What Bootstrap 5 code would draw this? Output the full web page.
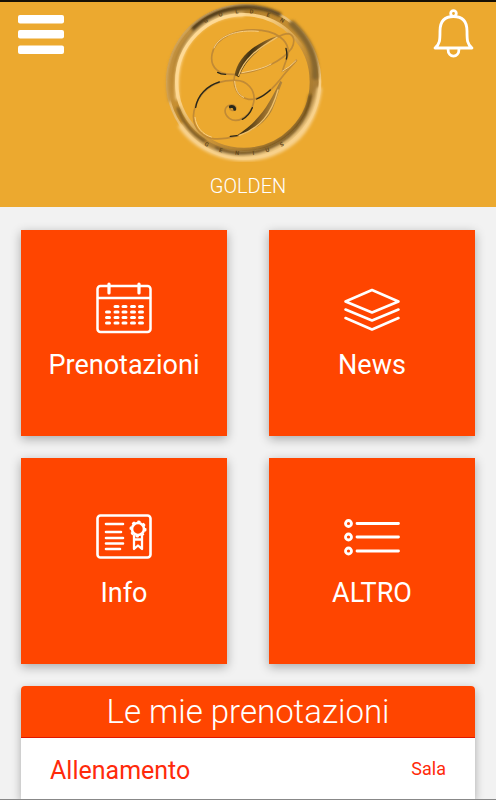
<!DOCTYPE html>
<html lang="it">
<head>
<meta charset="utf-8">
<meta name="viewport" content="width=device-width, initial-scale=1">
<title>Golden</title>
<link href="https://cdn.jsdelivr.net/npm/bootstrap@5.3.0/dist/css/bootstrap.min.css" rel="stylesheet">
<style>
body{font-family:Roboto,"Liberation Sans",sans-serif;background:#f2f2f2;min-height:100vh;border-bottom:1px solid #888}
.top-bar{background:#eca92f;border-top:2px solid #161005;height:207px}
.icon-btn{background:none;border:0;padding:0;line-height:0}
.menu-btn{margin:13px 0 0 18px}
.bell-btn{margin:7px 22px 0 0}
.brand-name{font-size:20px;line-height:24px;font-weight:300;margin-top:12px}
.engraved{font-size:17px;font-weight:700;fill:#63471a}
.content-area{padding:23px 21px 0}
.tile-grid{display:grid;grid-template-columns:1fr 1fr;gap:22px 42px}
.tile{background:#ff4500;aspect-ratio:1;box-shadow:0 3px 10px rgba(0,0,0,.3);font-size:27px;line-height:36px;padding-bottom:2px}
.tile svg{margin-bottom:13px}
.bookings{margin-top:22px;border-radius:4px 4px 0 0;box-shadow:0 3px 10px rgba(0,0,0,.3)}
.bookings-head{background:#ff4500;border-bottom:1px solid #e01800;border-radius:4px 4px 0 0;font-size:33px;line-height:51px;font-weight:300}
.bookings-row{color:#ff2a0a;padding:15px 28px 9px;margin:0 1px;min-height:61px}
.activity{font-size:25px;line-height:36px}
.room{font-size:18px;line-height:32px}
</style>
<script src="https://cdn.jsdelivr.net/npm/bootstrap@5.3.0/dist/js/bootstrap.bundle.min.js"></script>
</head>
<body>
<header class="top-bar position-relative text-white">
  <div class="d-flex justify-content-between position-absolute top-0 start-0 w-100">
    <button class="icon-btn menu-btn align-self-start" type="button" aria-label="Menu">
      <svg width="47" height="40" viewBox="0 0 47 40" fill="#fff"><rect y="0" width="46" height="8.500" rx="2"/><rect y="15" width="46" height="8.500" rx="2"/><rect y="30.500" width="46" height="8.500" rx="2"/></svg>
    </button>
    <button class="icon-btn bell-btn align-self-start" type="button" aria-label="Notifiche">
      <svg width="42" height="50" viewBox="0 0 42 50" fill="none" stroke="#fff" stroke-width="2.800" stroke-linejoin="round"><circle cx="21.500" cy="4.500" r="2.800"/><path d="M3 39C8 35 8 31 8 22C8 12 13 7.500 21.500 7.500S35 12 35 22C35 31 35 35 40 39ZM16 40C16 49.500 27 49.500 27 40"/></svg>
    </button>
  </div>
  <div class="d-flex flex-column align-items-center">
    <svg width="180" height="160" viewBox="6 6 540 480" fill="none" stroke-linecap="round" role="img" aria-label="Golden logo">
      <defs>
        <linearGradient id="rim" x1="0.200" y1="0" x2="0.800" y2="1"><stop offset="0" stop-color="#80602a"/><stop offset=".2" stop-color="#b9852f"/><stop offset=".5" stop-color="#cd9433"/><stop offset=".75" stop-color="#a87c36"/><stop offset="1" stop-color="#f6d086"/></linearGradient>
        <linearGradient id="glow" x1="0" y1="0" x2="1" y2="1"><stop offset="0" stop-color="#ffdc9a"/><stop offset=".35" stop-color="#f8cf83"/><stop offset=".6" stop-color="#c99237"/><stop offset="1" stop-color="#80602a"/></linearGradient>
        <linearGradient id="outer" x1="0" y1="0" x2="1" y2="1"><stop offset="0" stop-color="#caa05a"/><stop offset=".5" stop-color="#f2c678"/><stop offset="1" stop-color="#fbd591"/></linearGradient>
        <linearGradient id="pen" x1="0" y1="0.300" x2="1" y2="0.700"><stop offset="0" stop-color="#b9842f"/><stop offset=".35" stop-color="#3f3011"/><stop offset=".6" stop-color="#8e6526"/><stop offset="1" stop-color="#e8b860"/></linearGradient>
        <filter id="soften" x="-20%" y="-20%" width="140%" height="140%"><feGaussianBlur stdDeviation="4"/></filter>
      </defs>
      <circle cx="263" cy="246" r="216" stroke="url(#rim)" stroke-width="32"/>
      <circle cx="263" cy="246" r="229" stroke="url(#outer)" stroke-width="8"/>
      <circle cx="264" cy="246" r="202" stroke="url(#glow)" stroke-width="10"/>
      <g filter="url(#soften)">
        <path d="M110 87C185 15 290 5 370 43" stroke="#4d3916" stroke-width="12"/>
        <path d="M409 72C459 120 481 175 478 230" stroke="#86662e" stroke-width="20"/>
        <path d="M66 325C80 365 105 400 145 423" stroke="#6b4e1d" stroke-width="8"/>
        <path d="M180 446C265 479 361 450 415 391C443 361 459 322 463 287" stroke="#654717" stroke-width="9"/>
        <path d="M75 380C155 490 315 505 412 425C458 387 484 323 490 268" stroke="#f8d18b" stroke-width="15"/>
        <path d="M42 300C28 215 53 144 103 92" stroke="#c5933f" stroke-width="13"/>
        <path d="M64 295C55 198 82 129 137 85C172 57 218 43 260 44" stroke="#ffdb98" stroke-width="11"/>
      </g>
      <g class="engraved" text-anchor="middle" aria-hidden="true">
        <text transform="translate(152 67) rotate(-30)">G</text><text transform="translate(195 49) rotate(-18)">O</text><text transform="translate(243 40) rotate(-5)">L</text><text transform="translate(286 40) rotate(6)">D</text><text transform="translate(335 50) rotate(19)">E</text><text transform="translate(376 66) rotate(30)">N</text>
        <text transform="translate(149 438) rotate(31)">G</text><text transform="translate(193 456) rotate(19)">E</text><text transform="translate(243 465) rotate(5)">N</text><text transform="translate(293 465) rotate(-7)">I</text><text transform="translate(336 456) rotate(-19)">U</text><text transform="translate(380 438) rotate(-31)">S</text>
      </g>
      <g stroke="#c18a35" stroke-width="5">
        <path d="M237 223C190 225 161 205 168 163C178 110 246 83 317 91C375 98 407 133 393 174C388 190 382 201 380 213C396 207 412 195 421 181"/>
        <path d="M246 221C315 216 382 181 407 145C419 122 413 105 397 101C381 101 367 110 358 115"/>
        <path d="M235 241C172 239 126 278 114 333C106 374 129 406 166 415C191 420 223 413 248 406"/>
        <path d="M237 223C227 259 246 293 278 298C318 302 353 265 383 225L421 181"/>
        <path d="M235 241C273 239 300 270 293 307C285 345 247 374 220 355C202 342 203 319 223 315C235 313 243 321 238 329C230 334 222 330 221 324"/>
      </g>
      <path d="M236 226C243 177 292 129 367 107C313 145 266 179 249 232Z" fill="url(#pen)"/>
      <path d="M373 243C343 301 319 358 240 408C294 394 332 364 350 326C362 301 366 275 379 247Z" fill="url(#pen)"/>
      <path d="M248 226C263 178 303 147 363 112M250 406C314 384 346 342 366 270" stroke="#efc06a" stroke-width="4"/>
      <g stroke="#292719" stroke-width="4">
        <path d="M185 217Q194 223 209 223M119 322C125 286 153 257 190 246M302 297Q322 289 343 270M223 409L243 407M259 358Q280 346 289 323M390 145Q395 166 391 177"/>
        <path d="M223 320Q236 318 236 328" stroke-width="9"/>
      </g>
      <path d="M174 144C189 107 245 88 307 94M258 218C291 212 323 205 345 192M236 244C238 268 246 285 263 292M117 352C120 381 140 404 166 411M380 213Q400 203 420 182" stroke="#f7cf87" stroke-width="3"/>
    </svg>
    <div class="brand-name">GOLDEN</div>
  </div>
</header>
<main class="content-area">
  <nav class="tile-grid" aria-label="Sezioni">
    <a href="#prenotazioni" class="tile d-flex flex-column align-items-center justify-content-center text-white text-decoration-none">
      <svg width="56" height="52" viewBox="0 0 56 52" fill="none" stroke="#fff" stroke-width="2.500" stroke-linecap="round"><rect x="1.500" y="4" width="53" height="46" rx="3"/><path d="M2 16H54"/><path d="M13 2V11M43 2V11" stroke-width="3.200"/><path d="M19 24.500h3M27 24.500h3M35.500 24.500h3M43.500 24.500h3M10.500 30h3M19 30h3M27 30h3M35.500 30h3M43.500 30h3M10.500 35.500h3M19 35.500h3M27 35.500h3M35.500 35.500h3M43.500 35.500h3M10.500 41h3M19 41h3M27 41h3M35.500 41h3M43.500 41h3" stroke-width="3"/></svg>
      Prenotazioni
    </a>
    <a href="#news" class="tile d-flex flex-column align-items-center justify-content-center text-white text-decoration-none">
      <svg width="56" height="52" viewBox="0 0 56 52" fill="none" stroke="#fff" stroke-width="2.500" stroke-linecap="round" stroke-linejoin="round"><path d="M28 8L54.500 19.500L28 30.500L1.500 19.500ZM1.500 27.500L28 38.500L54.500 27.500M1.500 36L28 47.500L54.500 36"/></svg>
      News
    </a>
    <a href="#info" class="tile d-flex flex-column align-items-center justify-content-center text-white text-decoration-none">
      <svg width="56" height="52" viewBox="0 0 56 52" fill="none" stroke="#fff" stroke-width="2.600" stroke-linecap="round" stroke-linejoin="round"><rect x="1.500" y="5.500" width="53" height="42" rx="3"/><path d="M10 14H27M10 22H25M10 28H27M10 33.500H27M10 39H24"/><circle cx="42" cy="19" r="6"/><circle cx="42" cy="19" r="7.500" stroke-width="2" stroke-dasharray="1.500 4.390"/><path d="M38 26V39L42 35.500L46 39V26M39 29.500H45" stroke-width="2.300"/></svg>
      Info
    </a>
    <a href="#altro" class="tile d-flex flex-column align-items-center justify-content-center text-white text-decoration-none">
      <svg width="56" height="52" viewBox="0 0 56 52" fill="none" stroke="#fff" stroke-width="2.800" stroke-linecap="round"><circle cx="4.500" cy="13.500" r="3"/><circle cx="4.500" cy="27" r="3"/><circle cx="4.500" cy="41" r="3"/><path d="M13 13.500H54.500M13 27H54.500M13 41H54.500"/></svg>
      ALTRO
    </a>
  </nav>
  <section class="bookings bg-white">
    <h1 class="bookings-head text-white text-center m-0">Le mie prenotazioni</h1>
    <div class="bookings-row d-flex justify-content-between">
      <span class="activity">Allenamento</span><span class="room">Sala</span>
    </div>
  </section>
</main>
</body>
</html>
